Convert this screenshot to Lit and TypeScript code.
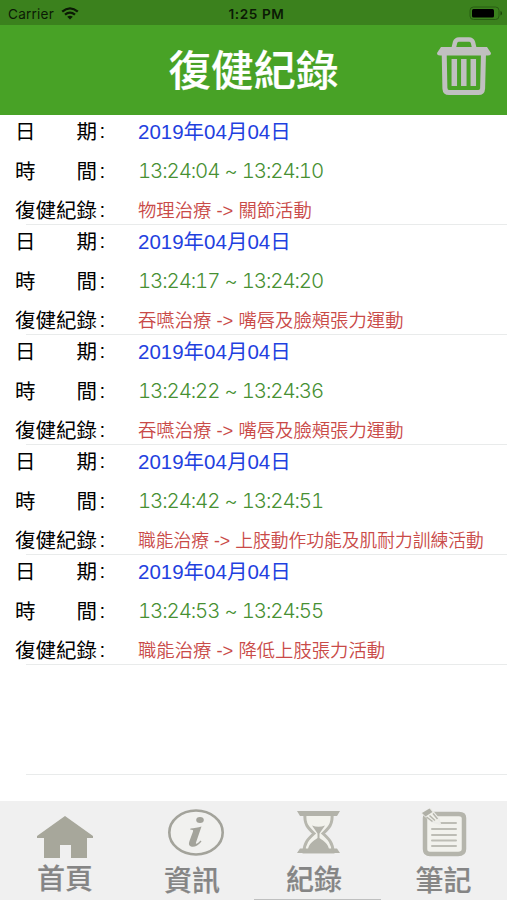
import { LitElement, html, css, svg } from "lit";
import { customElement, property } from "lit/decorators.js";

interface Entry {
  date: string;
  time: string;
  note: string;
  tight?: boolean;
}

const ENTRIES: Entry[] = [
  { date: "2019年04月04日", time: "13:24:04 ~ 13:24:10", note: "物理治療 -> 關節活動" },
  { date: "2019年04月04日", time: "13:24:17 ~ 13:24:20", note: "吞嚥治療 -> 嘴唇及臉頰張力運動" },
  { date: "2019年04月04日", time: "13:24:22 ~ 13:24:36", note: "吞嚥治療 -> 嘴唇及臉頰張力運動" },
  { date: "2019年04月04日", time: "13:24:42 ~ 13:24:51", note: "職能治療 -> 上肢動作功能及肌耐力訓練活動", tight: true },
  { date: "2019年04月04日", time: "13:24:53 ~ 13:24:55", note: "職能治療 -> 降低上肢張力活動" },
];

const homeIcon = svg`
  <path d="M28 3 L56 23 V25 H50 V45 H34 V32 H23 V45 H7 V25 H0 V23 Z" fill="#a7a79b"/>`;

const infoIcon = svg`
  <ellipse cx="28" cy="23.500" rx="26.700" ry="22" fill="#f1f1ef" stroke="#a3a39b" stroke-width="2.600"/>
  <ellipse cx="32" cy="11" rx="3.800" ry="3" fill="#a3a39b"/>
  <path d="M22.500 19.500 C26 19.300 30 18.500 33.500 17.500 L28 33.500 C27.500 35.500 29 35.500 32.500 31.500 L33.500 32.500 C30 37 26 38.500 23 37.500 C20.500 36.500 20.700 34.500 21.500 32 L25 22.500 C25.500 20.800 24.500 20.700 22.300 20.700 Z" fill="#a3a39b"/>`;

const hourglassIcon = svg`
  <path d="M8 4 H35 C36 14 32 18 26 23.500 C32 29 36 33 36 42 H7 C7 33 11 29 17 23.500 C11 18 7 14 8 4 Z" fill="#f2f2ec" stroke="#b7b7ae" stroke-width="3"/>
  <path d="M0 1 H43 L40 6 H3 Z M3 38.500 H40 L43 43 H0 Z" fill="#b3b3aa"/>
  <path d="M15 15.500 Q21.500 18 28 15.500 L22.500 23.500 V28 C27 31 31 34 32 39 H11 C12 34 16 31 20.500 28 V23.500 Z" fill="#b3b3aa"/>`;

const noteIcon = svg`
  <path d="M9 6 H38 Q43 6 43 10 V41 Q43 46 37 46 H9 Q4 46 4 41 V10 Q4 6 9 6 Z" fill="#f2f2ed" stroke="#b5b5ac" stroke-width="4.500"/>
  <path d="M19 15 H35 M11 21 H35 M11 27 H35 M11 32.500 H35 M11 38 H35" stroke="#bdbdb5" stroke-width="2" stroke-linecap="round"/>
  <path d="M1.500 5.500 L9.500 1 L18 11.500 L19 16 L11 13.500 Z" fill="#f0f0ea" stroke="#ecece8" stroke-width="2"/>
  <path d="M1 5 L8.500 0.500 L11.500 4 L4.500 8.500 Z" fill="#b0b0a7"/>
  <path d="M5.500 9 L11.500 13.500 M8.500 7.500 L14 12.500 M12 5.500 L16.500 11" stroke="#b5b5ac" stroke-width="1.500"/>`;

@customElement("record-entry")
export class RecordEntry extends LitElement {
  @property({ attribute: false }) entry!: Entry;

  static styles = css`
    :host {
      display: block;
      height: 110px;
      box-sizing: border-box;
      position: relative;
      color: #000;
      font: 20.5px "Liberation Sans", "Noto Sans CJK TC", sans-serif;
    }
    :host::after {
      content: "";
      position: absolute;
      left: 26px;
      right: 0;
      bottom: 0;
      height: 1px;
      background: #e9ebeb;
    }
    .line {
      display: grid;
      grid-template-columns: 82px 41px 1fr;
      height: 39.5px;
      line-height: 34px;
      padding-left: 15px;
      white-space: nowrap;
    }
    .label {
      display: flex;
      justify-content: space-between;
    }
    .colon {
      padding-left: 2.5px;
      line-height: 32px;
    }
    .date { color: #1f41e0; line-height: 33px; }
    .time {
      color: #479033;
      font: 300 20.4px/32px Inter, sans-serif;
      font-variant-numeric: tabular-nums;
      letter-spacing: -1.1px;
      word-spacing: 0.8px;
    }
    .note { color: #c94a48; font-size: 18.35px; font-weight: 350; }
    .tight { font-size: 17.75px; }
  `;

  private line(label: string[], kind: string, value: string) {
    return html`<div class="line">
      <span class="label">${label.map((c) => html`<span>${c}</span>`)}</span>
      <span class="colon">:</span>
      <span class=${kind}>${value}</span>
    </div>`;
  }

  render() {
    const e = this.entry;
    return html`
      ${this.line(["日", "期"], "date", e.date)}
      ${this.line(["時", "間"], "time", e.time)}
      ${this.line(["復健紀錄"], e.tight ? "note tight" : "note", e.note)}
    `;
  }
}

@customElement("app-root")
export class AppRoot extends LitElement {
  static styles = css`
    :host {
      display: flex;
      flex-direction: column;
      height: 900px;
      overflow: hidden;
      background: #fff;
      font-family: "Liberation Sans", "Noto Sans CJK TC", sans-serif;
    }
    .status {
      height: 25px;
      box-sizing: border-box;
      padding: 2px 4px 0 8px;
      background: #3b811d;
      color: #0b1a05;
      display: grid;
      grid-template-columns: 1fr auto 1fr;
      align-items: center;
      font: 13.6px Inter, sans-serif;
    }
    .carrier {
      display: flex;
      align-items: center;
      gap: 7px;
      letter-spacing: 0.2px;
    }
    .clock { font-weight: 600; letter-spacing: 0.6px; padding-left: 2px; }
    .battery { justify-self: end; }
    svg { display: block; }
    .header {
      height: 90px;
      background: #48a226;
      color: #fff;
      display: grid;
      grid-template-columns: 1fr auto 1fr;
      align-items: center;
    }
    .title {
      grid-column: 2;
      font-size: 42.5px;
      font-weight: 500;
      line-height: 60px;
      margin: 4px 0 0;
      -webkit-text-stroke: 0.2px #fff;
    }
    .trash {
      justify-self: end;
      margin: 0 16px 8px 0;
    }
    .list { flex: 1; }
    .rule {
      height: 1px;
      margin: 109px 0 0 26px;
      background: #e9ebeb;
    }
    .tabs {
      height: 99px;
      background: #f0f0f0;
      display: grid;
      grid-template-columns: 130px 124px 126px 127px;
      position: relative;
    }
    .tab {
      display: flex;
      flex-direction: column;
      align-items: center;
      color: #858585;
      font-size: 28px;
      font-weight: 500;
      line-height: 34px;
      -webkit-text-stroke: 0.2px #858585;
    }
    .home { padding-top: 12px; }
    .home .name { margin-top: 4px; }
    .info { padding-top: 8px; }
    .info svg { margin-left: 8px; }
    .info .name { margin-top: 9px; }
    .records { padding-top: 9px; }
    .records svg { margin-left: 3px; }
    .records .name { margin: 10px 6px 0 0; }
    .notes { padding-top: 7px; }
    .notes .name { margin-top: 8px; }
    .marker {
      position: absolute;
      left: 254px;
      bottom: 0;
      width: 127px;
      height: 1px;
      background: #bfc0c0;
    }
  `;

  render() {
    return html`
      <div class="status">
        <div class="carrier">
          <span>Carrier</span>
          <svg width="18" height="13" viewBox="0 0 18 13" fill="none" stroke="#0b1a05" stroke-width="2.300">
            <path d="M1.200 4.700 Q9 -2 16.800 4.700"/>
            <path d="M4 7.700 Q9 3.500 14 7.700"/>
            <path d="M9 12.500 L6.200 9.700 Q9 7.600 11.800 9.700 Z" fill="#0b1a05" stroke="none"/>
          </svg>
        </div>
        <span class="clock">1:25 PM</span>
        <svg class="battery" width="34" height="15" viewBox="0 0 34 15">
          <rect x="1" y="1" width="29" height="12.500" rx="3.500" fill="none" stroke="#285c12"/>
          <rect x="3" y="3" width="22" height="8.500" rx="1.500" fill="#000"/>
          <path d="M31.500 5 Q33 5.500 33 7.200 Q33 9 31.500 9.500 Z" fill="#1d450c"/>
        </svg>
      </div>
      <header class="header">
        <h1 class="title">復健紀錄</h1>
        <svg class="trash" width="54" height="59" viewBox="0 0 54 59">
          <path d="M16.500 12 L18 5.500 Q19 2.500 22 2.500 H32 Q35 2.500 36 5.500 L37.500 12" fill="none" stroke="#c0c0c0" stroke-width="4.500"/>
          <path d="M4 10 H50 L54 16 Q54 18.500 51 18.500 H3 Q0 18.500 0 16 Z" fill="#c0c0c0"/>
          <path d="M7.200 16 L7.900 51.500 Q8.200 55.500 12 55.500 H41.500 Q45.300 55.500 45.600 51.500 L46.500 16" fill="none" stroke="#c0c0c0" stroke-width="5"/>
          <path d="M17.300 22 V49 M26.800 22 V49 M36.300 22 V49" stroke="#c0c0c0" stroke-width="5.500"/>
        </svg>
      </header>
      <main class="list">
        ${ENTRIES.map((e) => html`<record-entry .entry=${e}></record-entry>`)}
        <div class="rule"></div>
      </main>
      <nav class="tabs">
        <div class="tab home">
          <svg width="56" height="46" viewBox="0 0 56 46">${homeIcon}</svg>
          <span class="name">首頁</span>
        </div>
        <div class="tab info">
          <svg width="56" height="47" viewBox="0 0 56 47">${infoIcon}</svg>
          <span class="name">資訊</span>
        </div>
        <div class="tab records">
          <svg width="43" height="44" viewBox="0 0 43 44">${hourglassIcon}</svg>
          <span class="name">紀錄</span>
        </div>
        <div class="tab notes">
          <svg width="46" height="49" viewBox="0 0 46 49">${noteIcon}</svg>
          <span class="name">筆記</span>
        </div>
        <div class="marker"></div>
      </nav>
    `;
  }
}
